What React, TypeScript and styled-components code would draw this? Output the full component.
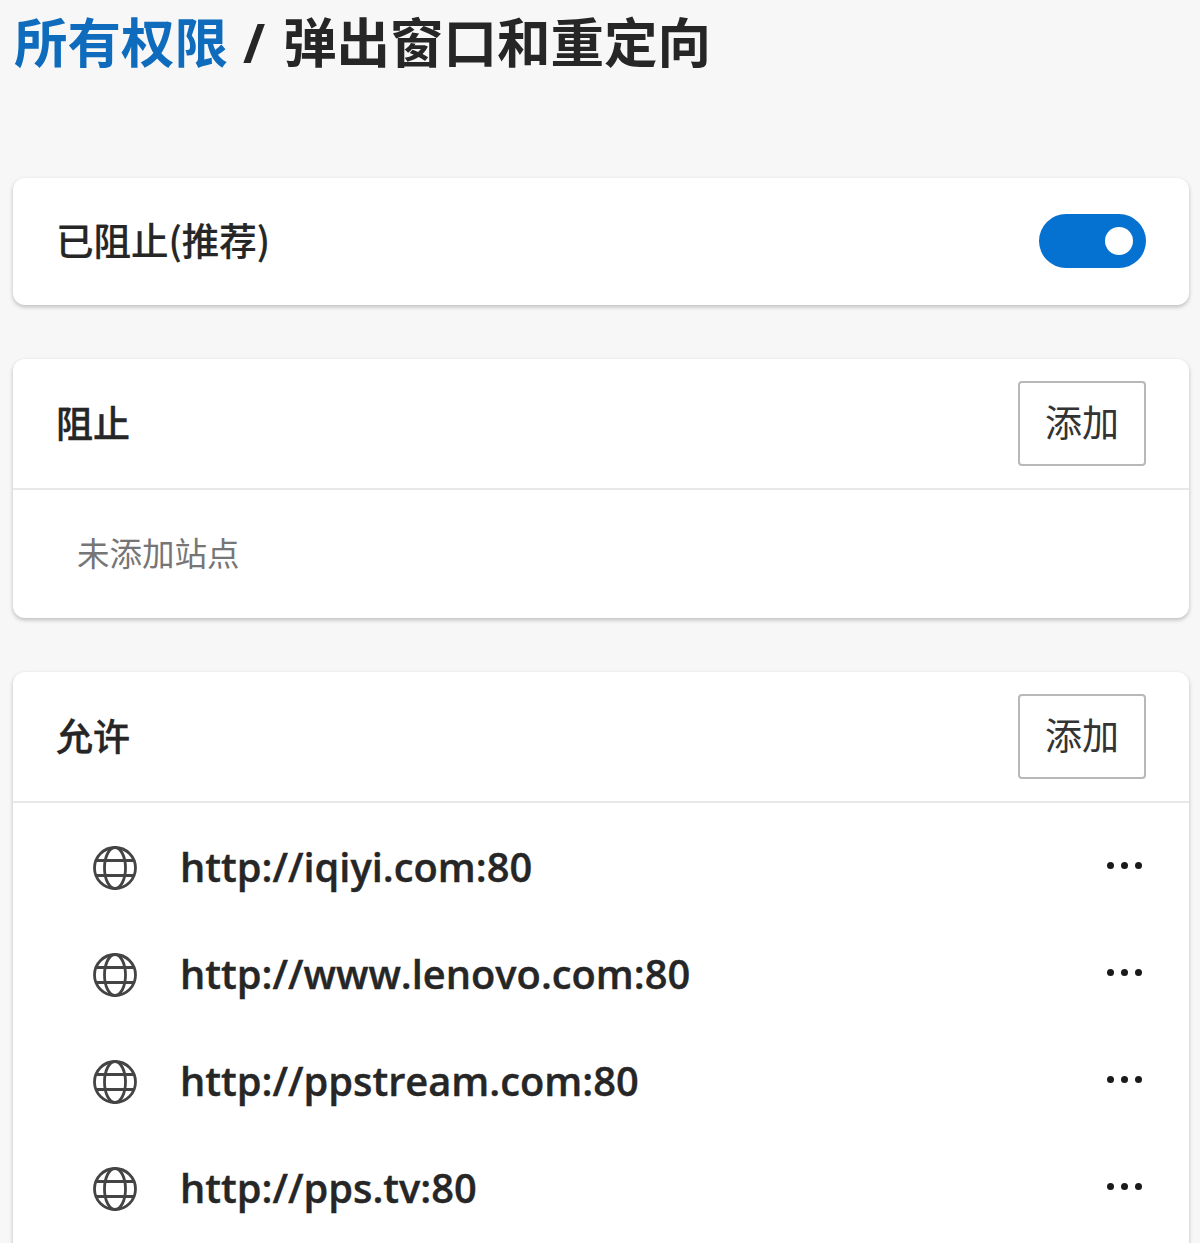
import React from "react";
import styled, { createGlobalStyle } from "styled-components";

const GlobalStyle = createGlobalStyle`
	html, body {
		margin: 0;
		padding: 0;
		height: 100%;
		background: #f7f7f7;
		overflow: hidden;
	}
`;

const allowedSites = [
	"http://iqiyi.com:80",
	"http://www.lenovo.com:80",
	"http://ppstream.com:80",
	"http://pps.tv:80",
];

const GlobeIcon = () => (
	<GlobeSvg width="44" height="44" viewBox="0 0 44 44" fill="none" stroke="#444" strokeWidth="2.8">
		<circle cx="22" cy="22" r="20.5" />
		<ellipse cx="22" cy="22" rx="10.5" ry="20.5" />
		<path d="M4 14.5h36M4 29.5h36" />
	</GlobeSvg>
);

const App = () => {
	return (
		<Page>
			<GlobalStyle />
			<Title>
				<TitleLink>所有权限</TitleLink>
				<TitleSlash>/</TitleSlash>
				弹出窗口和重定向
			</Title>
			<Cards>
				<Card>
					<ToggleRow>
						<ToggleLabel>已阻止(推荐)</ToggleLabel>
						<Toggle>
							<ToggleKnob />
						</Toggle>
					</ToggleRow>
				</Card>
				<Card>
					<CardHeader>
						<CardTitle>阻止</CardTitle>
						<AddButton>添加</AddButton>
					</CardHeader>
					<EmptyText>未添加站点</EmptyText>
				</Card>
				<Card>
					<CardHeader>
						<CardTitle>允许</CardTitle>
						<AddButton>添加</AddButton>
					</CardHeader>
					<SiteList>
						{allowedSites.map((site) => (
							<SiteRow key={site}>
								<GlobeIcon />
								<SiteUrl>{site}</SiteUrl>
								<MoreButton>
									<Dot />
									<Dot />
									<Dot />
								</MoreButton>
							</SiteRow>
						))}
					</SiteList>
				</Card>
			</Cards>
		</Page>
	);
};

const Page = styled.div`
	height: 1243px;
	overflow: hidden;
	padding: 0 11px 0 13px;
	font-family: "Open Sans", "Noto Sans CJK SC", sans-serif;
	color: #262626;
`;
const Title = styled.h1`
	margin: 0;
	height: 178px;
	padding: 8px 0 0 1px;
	box-sizing: border-box;
	font-size: 53.5px;
	line-height: 64px;
	font-weight: 700;
	font-family: "Noto Sans CJK SC", sans-serif;
	white-space: pre;
`;
const TitleLink = styled.span`
	color: #0f6cbd;
`;
const TitleSlash = styled.span`
	margin: 0 18px 0 15px;
	font-family: "Open Sans", sans-serif;
`;
const Cards = styled.div`
	display: flex;
	flex-direction: column;
	gap: 54px;
`;
const Card = styled.section`
	background: #fff;
	border-radius: 12px;
	box-shadow: 0 2px 4px rgba(0, 0, 0, 0.24);
`;
const ToggleRow = styled.div`
	height: 127px;
	display: flex;
	align-items: center;
	justify-content: space-between;
	padding: 0 43px;
`;
const ToggleLabel = styled.div`
	margin-top: -6px;
	font-size: 37.5px;
	font-weight: 500;
	font-family: "Noto Sans CJK SC", sans-serif;
	-webkit-text-stroke: 0.2px #262626;
`;
const Toggle = styled.div`
	margin-top: -2px;
	width: 107px;
	height: 54px;
	border-radius: 27px;
	background: #0571d0;
	position: relative;
`;
const ToggleKnob = styled.div`
	position: absolute;
	top: 13px;
	right: 13px;
	width: 28px;
	height: 28px;
	border-radius: 50%;
	background: #fff;
`;
const CardHeader = styled.div`
	height: 131px;
	box-sizing: border-box;
	display: flex;
	align-items: center;
	justify-content: space-between;
	padding: 0 43px;
	border-bottom: 2px solid #e8e8e8;
`;
const CardTitle = styled.div`
	margin-top: -4px;
	font-size: 37px;
	font-weight: 500;
	font-family: "Noto Sans CJK SC", sans-serif;
	-webkit-text-stroke: 0.4px #262626;
`;
const AddButton = styled.button`
	width: 128px;
	height: 85px;
	box-sizing: border-box;
	background: #fff;
	border: 2px solid #b8b8b8;
	border-radius: 4px;
	font-size: 37px;
	line-height: 77px;
	font-family: "Noto Sans CJK SC", sans-serif;
	color: #333;
	padding: 0 0 4px;
`;
const EmptyText = styled.div`
	height: 128px;
	display: flex;
	align-items: center;
	padding: 0 0 5px 64px;
	box-sizing: border-box;
	font-size: 32.5px;
	color: #767676;
	font-family: "Noto Sans CJK SC", sans-serif;
`;
const SiteList = styled.div`
	display: flex;
	flex-direction: column;
	padding: 10px 0 40px;
`;
const SiteRow = styled.div`
	height: 107px;
	display: flex;
	align-items: center;
	padding: 0 47px 0 80px;
`;
const GlobeSvg = styled.svg`
	margin-top: 2px;
`;
const SiteUrl = styled.div`
	flex: 1;
	margin-left: 43px;
	font-size: 39.8px;
	font-weight: 600;
	-webkit-text-stroke: 0.4px #262626;
`;
const MoreButton = styled.div`
	display: flex;
	gap: 7px;
	margin-top: -2px;
`;
const Dot = styled.span`
	width: 7px;
	height: 7px;
	border-radius: 50%;
	background: #1a1a1a;
`;

export default App;
